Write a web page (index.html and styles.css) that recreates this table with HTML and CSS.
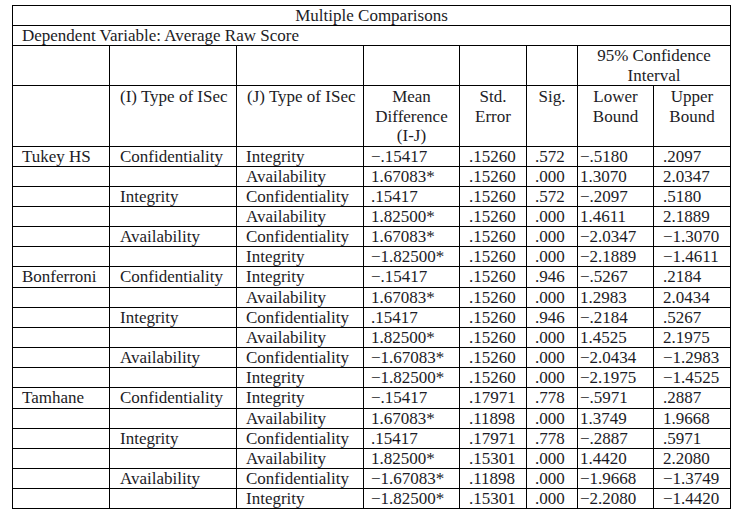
FILE: index.html
```html
<!DOCTYPE html>
<html>
<head>
<meta charset="utf-8">
<title>Multiple Comparisons</title>
<link rel="stylesheet" href="styles.css">
</head>
<body>
<table class="mc">
  <colgroup>
    <col class="c1"><col class="c2"><col class="c3"><col class="c4"><col class="c5"><col class="c6"><col class="c7"><col class="c8">
  </colgroup>
  <tbody>
    <tr class="r-title"><td colspan="8" class="title">Multiple Comparisons</td></tr>
    <tr class="r-dep"><td colspan="8" class="dep">Dependent Variable: Average Raw Score</td></tr>
    <tr class="r-h1">
      <td></td><td></td><td></td><td></td><td></td><td></td>
      <td colspan="2" class="hc">95% Confidence<br>Interval</td>
    </tr>
    <tr class="r-h2">
      <td></td>
      <td class="hl">(I) Type of ISec</td>
      <td class="hl">(J) Type of ISec</td>
      <td class="hc">Mean<br>Difference<br>(I-J)</td>
      <td class="hc">Std.<br>Error</td>
      <td class="hc">Sig.</td>
      <td class="hc">Lower<br>Bound</td>
      <td class="hc">Upper<br>Bound</td>
    </tr>

    <tr class="r"><td class="p1">Tukey HS</td><td class="p2">Confidentiality</td><td class="p3">Integrity</td><td class="p4">&minus;.15417</td><td class="p5">.15260</td><td class="p6">.572</td><td class="p7">&minus;.5180</td><td class="p8">.2097</td></tr>
    <tr class="r"><td class="p1"></td><td class="p2"></td><td class="p3">Availability</td><td class="p4">1.67083*</td><td class="p5">.15260</td><td class="p6">.000</td><td class="p7">1.3070</td><td class="p8">2.0347</td></tr>
    <tr class="r"><td class="p1"></td><td class="p2">Integrity</td><td class="p3">Confidentiality</td><td class="p4">.15417</td><td class="p5">.15260</td><td class="p6">.572</td><td class="p7">&minus;.2097</td><td class="p8">.5180</td></tr>
    <tr class="r"><td class="p1"></td><td class="p2"></td><td class="p3">Availability</td><td class="p4">1.82500*</td><td class="p5">.15260</td><td class="p6">.000</td><td class="p7">1.4611</td><td class="p8">2.1889</td></tr>
    <tr class="r"><td class="p1"></td><td class="p2">Availability</td><td class="p3">Confidentiality</td><td class="p4">1.67083*</td><td class="p5">.15260</td><td class="p6">.000</td><td class="p7">&minus;2.0347</td><td class="p8">&minus;1.3070</td></tr>
    <tr class="r"><td class="p1"></td><td class="p2"></td><td class="p3">Integrity</td><td class="p4">&minus;1.82500*</td><td class="p5">.15260</td><td class="p6">.000</td><td class="p7">&minus;2.1889</td><td class="p8">&minus;1.4611</td></tr>

    <tr class="r"><td class="p1">Bonferroni</td><td class="p2">Confidentiality</td><td class="p3">Integrity</td><td class="p4">&minus;.15417</td><td class="p5">.15260</td><td class="p6">.946</td><td class="p7">&minus;.5267</td><td class="p8">.2184</td></tr>
    <tr class="r"><td class="p1"></td><td class="p2"></td><td class="p3">Availability</td><td class="p4">1.67083*</td><td class="p5">.15260</td><td class="p6">.000</td><td class="p7">1.2983</td><td class="p8">2.0434</td></tr>
    <tr class="r"><td class="p1"></td><td class="p2">Integrity</td><td class="p3">Confidentiality</td><td class="p4">.15417</td><td class="p5">.15260</td><td class="p6">.946</td><td class="p7">&minus;.2184</td><td class="p8">.5267</td></tr>
    <tr class="r"><td class="p1"></td><td class="p2"></td><td class="p3">Availability</td><td class="p4">1.82500*</td><td class="p5">.15260</td><td class="p6">.000</td><td class="p7">1.4525</td><td class="p8">2.1975</td></tr>
    <tr class="r"><td class="p1"></td><td class="p2">Availability</td><td class="p3">Confidentiality</td><td class="p4">&minus;1.67083*</td><td class="p5">.15260</td><td class="p6">.000</td><td class="p7">&minus;2.0434</td><td class="p8">&minus;1.2983</td></tr>
    <tr class="r"><td class="p1"></td><td class="p2"></td><td class="p3">Integrity</td><td class="p4">&minus;1.82500*</td><td class="p5">.15260</td><td class="p6">.000</td><td class="p7">&minus;2.1975</td><td class="p8">&minus;1.4525</td></tr>

    <tr class="r"><td class="p1">Tamhane</td><td class="p2">Confidentiality</td><td class="p3">Integrity</td><td class="p4">&minus;.15417</td><td class="p5">.17971</td><td class="p6">.778</td><td class="p7">&minus;.5971</td><td class="p8">.2887</td></tr>
    <tr class="r"><td class="p1"></td><td class="p2"></td><td class="p3">Availability</td><td class="p4">1.67083*</td><td class="p5">.11898</td><td class="p6">.000</td><td class="p7">1.3749</td><td class="p8">1.9668</td></tr>
    <tr class="r"><td class="p1"></td><td class="p2">Integrity</td><td class="p3">Confidentiality</td><td class="p4">.15417</td><td class="p5">.17971</td><td class="p6">.778</td><td class="p7">&minus;.2887</td><td class="p8">.5971</td></tr>
    <tr class="r"><td class="p1"></td><td class="p2"></td><td class="p3">Availability</td><td class="p4">1.82500*</td><td class="p5">.15301</td><td class="p6">.000</td><td class="p7">1.4420</td><td class="p8">2.2080</td></tr>
    <tr class="r"><td class="p1"></td><td class="p2">Availability</td><td class="p3">Confidentiality</td><td class="p4">&minus;1.67083*</td><td class="p5">.11898</td><td class="p6">.000</td><td class="p7">&minus;1.9668</td><td class="p8">&minus;1.3749</td></tr>
    <tr class="r"><td class="p1"></td><td class="p2"></td><td class="p3">Integrity</td><td class="p4">&minus;1.82500*</td><td class="p5">.15301</td><td class="p6">.000</td><td class="p7">&minus;2.2080</td><td class="p8">&minus;1.4420</td></tr>
  </tbody>
</table>
</body>
</html>
```

FILE: styles.css
```css
html, body {
  margin: 0;
  padding: 0;
  background: #ffffff;
}

body {
  font-family: "Liberation Serif", "Times New Roman", serif;
  font-size: 17px;
  color: #1c1c26;
}

.mc {
  margin: 5px 0 0 12px;
  border-collapse: separate;
  border-spacing: 0;
  border-top: 1px solid #000;
  border-left: 1px solid #000;
  table-layout: fixed;
  width: 719px;
}

.mc td {
  border-right: 1px solid #000;
  border-bottom: 1px solid #000;
  padding: 0;
  vertical-align: top;
  white-space: nowrap;
  box-sizing: border-box;
  line-height: 19px;
}

.c1 { width: 97px; }
.c2 { width: 127px; }
.c3 { width: 127px; }
.c4 { width: 96px; }
.c5 { width: 67px; }
.c6 { width: 51px; }
.c7 { width: 76px; }
.c8 { width: 77px; }

.r-title td { height: 20px; }
.r-dep td { height: 20px; }
.r-h1 td { height: 39px; }
.r-h2 td { height: 59px; padding-top: 1px; }
.r td { height: 20.17px; }

.title {
  text-align: center;
}

.dep {
  padding-left: 9px !important;
}

.r-h1 .hc,
.r-h2 .hc {
  text-align: center;
  line-height: 19.5px;
}

.hl {
  padding-left: 10px !important;
  line-height: 19.5px;
}

.p1 { padding-left: 9px !important; }
.p2 { padding-left: 10px !important; }
.p3 { padding-left: 9px !important; }
.p4 { padding-left: 7px !important; }
.p5 { padding-left: 9px !important; }
.p6 { padding-left: 8px !important; }
.p7 { padding-left: 2px !important; }
.p8 { padding-left: 9px !important; }
```
